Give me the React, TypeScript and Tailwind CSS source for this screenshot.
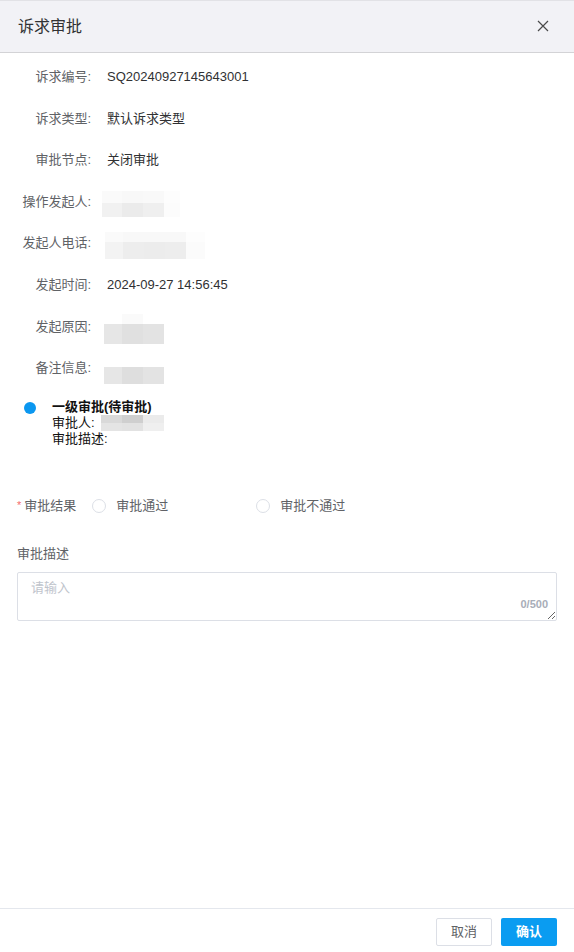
import React from "react";

const font = { fontFamily: '"Liberation Sans", "Noto Sans CJK SC", sans-serif' };

function Cells({ rows }: { rows: { h: number; cells: [number, string][] }[] }) {
  return (
    <div className="flex flex-col">
      {rows.map((r, i) => (
        <div key={i} className="flex" style={{ height: r.h }}>
          {r.cells.map(([w, c], j) => (
            <div key={j} style={{ width: w, background: c }} />
          ))}
        </div>
      ))}
    </div>
  );
}

function Row({ label, children }: { label: string; children?: React.ReactNode }) {
  return (
    <div className="flex items-center h-[41.6px]">
      <div className="w-[91px] text-right text-[#606266] shrink-0">{label}</div>
      <div className="ml-[16px] text-[#303133] flex items-center">{children}</div>
    </div>
  );
}

export default function App() {
  return (
    <div className="w-[574px] h-[952px] flex flex-col bg-white text-[13px]" style={font}>
      <div className="h-[53px] shrink-0 bg-[#f2f2f6] border-t border-t-[#e2e2e6] border-b border-b-[#d3d3d6] flex items-center justify-between pl-[18px] pr-[25px]">
        <span className="text-[16px] text-[#303133] leading-none">诉求审批</span>
        <svg width="12" height="12" viewBox="0 0 12 12" className="mt-[-2px]">
          <path d="M1 1L11 11M11 1L1 11" stroke="#4a4a4a" strokeWidth="1.2" />
        </svg>
      </div>

      <div className="flex-1 flex flex-col">
        <div className="pt-[3px]">
          <Row label="诉求编号:">SQ20240927145643001</Row>
          <Row label="诉求类型:">默认诉求类型</Row>
          <Row label="审批节点:">关闭审批</Row>
          <Row label="操作发起人:">
            <div className="ml-[-5px] mt-[4px]">
              <Cells
                rows={[
                  { h: 12, cells: [[20, "#fafafa"], [21, "#f8f8f8"], [21, "#f9f9f9"], [16, "#fdfdfd"]] },
                  { h: 14, cells: [[20, "#f1f1f1"], [21, "#ebebeb"], [21, "#efefef"], [16, "#fcfcfc"]] },
                ]}
              />
            </div>
          </Row>
          <Row label="发起人电话:">
            <div className="ml-[-2px] mt-[4px]">
              <Cells
                rows={[
                  { h: 10, cells: [[18, "#fafafa"], [21, "#f8f8f8"], [21, "#f8f8f8"], [21, "#f8f8f8"], [19, "#fdfdfd"]] },
                  { h: 17, cells: [[18, "#f3f3f3"], [21, "#ededed"], [21, "#ececec"], [21, "#ededed"], [19, "#fbfbfb"]] },
                ]}
              />
            </div>
          </Row>
          <Row label="发起时间:">2024-09-27 14:56:45</Row>
          <Row label="发起原因:">
            <div className="ml-[-3px] mt-[6px]">
              <Cells
                rows={[
                  { h: 10, cells: [[18, "#ffffff"], [21, "#fafafa"], [21, "#ffffff"]] },
                  { h: 20, cells: [[18, "#e6e6e6"], [21, "#e0e0e0"], [21, "#e3e3e3"]] },
                ]}
              />
            </div>
          </Row>
          <Row label="备注信息:">
            <div className="ml-[-3px] mt-[16px]">
              <Cells rows={[{ h: 17, cells: [[18, "#e6e6e6"], [21, "#dedede"], [21, "#e3e3e3"]] }]} />
            </div>
          </Row>
        </div>

        <div className="mt-[10px] flex pl-[24px]">
          <div className="w-[12px] h-[12px] rounded-full bg-[#0b97f0] mt-[3px] shrink-0" />
          <div className="ml-[16px] leading-[16px] text-[#111]">
            <div className="font-bold">一级审批(待审批)</div>
            <div className="flex items-center">
              <span>审批人:</span>
              <div className="ml-[6px]">
                <Cells
                  rows={[
                    { h: 8, cells: [[21, "#d9d9d9"], [21, "#cfcfcf"], [21, "#ebebeb"]] },
                    { h: 8, cells: [[21, "#e4e4e4"], [21, "#e2e2e2"], [21, "#efefef"]] },
                  ]}
                />
              </div>
            </div>
            <div>审批描述:</div>
          </div>
        </div>

        <div className="mt-[49px] flex items-center pl-[17px] text-[#606266]">
          <span className="text-[#f56c6c] text-[11px] mr-[3px] self-start mt-[1px]">*</span>
          <span>审批结果</span>
          <span className="ml-[16px] w-[14px] h-[14px] rounded-full border border-[#dcdfe6] bg-white" />
          <span className="ml-[10px]">审批通过</span>
          <span className="ml-[88px] w-[14px] h-[14px] rounded-full border border-[#dcdfe6] bg-white" />
          <span className="ml-[10px]">审批不通过</span>
        </div>

        <div className="mt-[29px] pl-[17px] text-[#606266]">审批描述</div>
        <div className="mt-[8px] mx-[17px] relative">
          <textarea
            className="block w-full h-[49px] border border-[#dcdfe6] rounded-[2px] px-[13px] py-[5px] text-[13px] text-[#606266] placeholder:text-[#c0c4cc] outline-none"
            placeholder="请输入"
            style={font}
          />
          <span className="absolute right-[9px] bottom-[11px] text-[11px] font-semibold text-[#a8adb8] leading-none">0/500</span>
        </div>
      </div>

      <div className="h-[44px] shrink-0 border-t border-[#e4e7ed] flex items-start justify-end pr-[17px] pt-[9px] gap-[9px]">
        <button className="w-[56px] h-[28px] border border-[#dcdfe6] bg-white text-[#606266] text-[13px] rounded-[2px]" style={font}>
          取消
        </button>
        <button className="w-[56px] h-[28px] bg-[#0a9cf1] text-white text-[13px] font-bold rounded-[2px]" style={font}>
          确认
        </button>
      </div>
    </div>
  );
}
